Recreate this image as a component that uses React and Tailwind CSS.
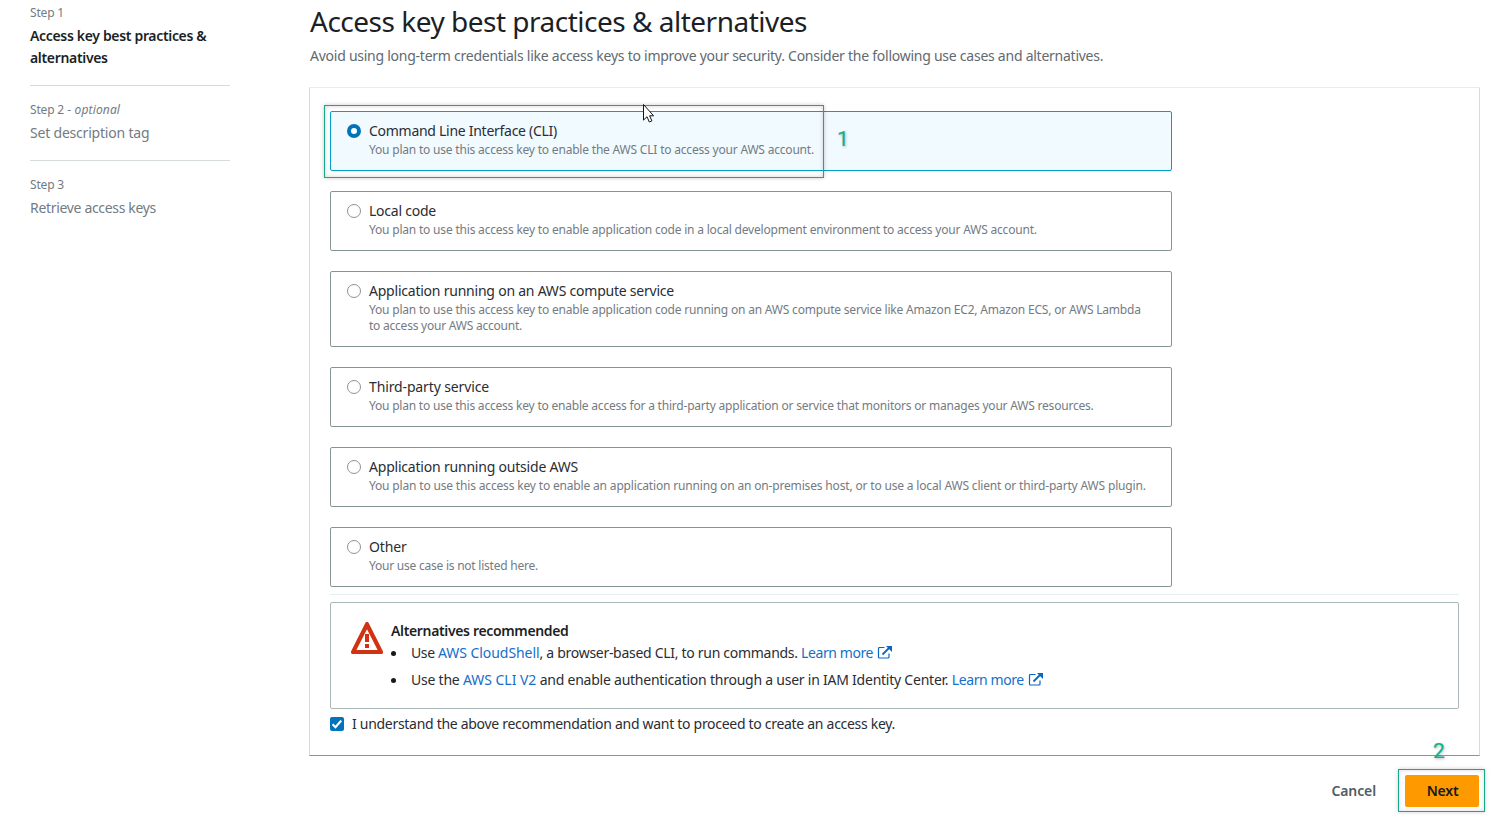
import React from "react";

const USE_CASES = [
  {
    title: "Command Line Interface (CLI)",
    titleClass: "tracking-[-0.278px]",
    lines: [
      ["You plan to use this access key to enable the AWS CLI to access your AWS account.", "tracking-[-0.197px]"],
    ],
    selected: true,
  },
  {
    title: "Local code",
    titleClass: "tracking-[-0.233px]",
    lines: [
      ["You plan to use this access key to enable application code in a local development environment to access your AWS account.", "tracking-[-0.195px]"],
    ],
  },
  {
    title: "Application running on an AWS compute service",
    titleClass: "tracking-[-0.225px]",
    lines: [
      ["You plan to use this access key to enable application code running on an AWS compute service like Amazon EC2, Amazon ECS, or AWS Lambda", "tracking-[-0.194px]"],
      ["to access your AWS account.", "tracking-[-0.228px]"],
    ],
  },
  {
    title: "Third-party service",
    titleClass: "tracking-[-0.13px]",
    lines: [
      ["You plan to use this access key to enable access for a third-party application or service that monitors or manages your AWS resources.", "tracking-[-0.207px]"],
    ],
  },
  {
    title: "Application running outside AWS",
    titleClass: "tracking-[-0.206px]",
    lines: [
      ["You plan to use this access key to enable an application running on an on-premises host, or to use a local AWS client or third-party AWS plugin.", "tracking-[-0.166px]"],
    ],
  },
  {
    title: "Other",
    titleClass: "tracking-[-0.164px]",
    lines: [["Your use case is not listed here.", "tracking-[-0.232px]"]],
  },
];

function Radio({ selected }) {
  return selected ? (
    <span className="mt-1 size-3.5 shrink-0 rounded-full border-[4.5px] border-[#0073bb] bg-white" />
  ) : (
    <span className="mt-1 size-3.5 shrink-0 rounded-full border border-[#879596] bg-white" />
  );
}

function Tile({ item }) {
  return (
    <div
      className={`relative flex w-[842px] gap-2 rounded-[2px] border pt-2 pb-3 pl-4 ${
        item.selected ? "border-[#00a1c9] bg-[#f1faff]" : "border-[#879596] bg-white"
      }`}
    >
      <Radio selected={item.selected} />
      <div className="whitespace-nowrap">
        <div className={`text-[14px] leading-[22px] text-[#2a2d33] ${item.titleClass}`}>{item.title}</div>
        {item.lines.map(([text, cls]) => (
          <div key={text} className={`text-[12px] leading-4 text-[#737b83] ${cls}`}>
            {text}
          </div>
        ))}
      </div>
      {item.selected && (
        <>
          <div className="absolute -top-[7px] -left-[7px] h-[73px] w-[500px] border border-[#16a98c] shadow-[0_0_4px_rgba(0,0,0,0.22),inset_0_0_4px_rgba(0,0,0,0.18)]" />
          <span className="absolute top-[14px] left-[506px] font-[Roboto,sans-serif] text-[21px] leading-[26px] text-[#12b18e] [-webkit-text-stroke:0.2px_#12b18e] [text-shadow:1px_1px_3px_rgba(0,0,0,0.3)]">
            1
          </span>
          <Cursor />
        </>
      )}
    </div>
  );
}

function Cursor() {
  return (
    <svg className="absolute -top-[9px] left-[310px] h-[21px] w-[13px]" viewBox="0 0 13 21">
      <path d="M2.5 1.500v15.600l3.500-3.400 2.300 5.300 2.600-1.100-2.300-5.100h4z" fill="#fff" stroke="#10141c" strokeWidth="1" />
    </svg>
  );
}

function ExternalIcon() {
  return (
    <svg className="ml-1 inline-block h-[15px] w-[15px] align-[-2px]" viewBox="0 0 15 15" fill="none">
      <path d="M7.500 2.500h-5a1 1 0 0 0-1 1V12a1 1 0 0 0 1 1H11a1 1 0 0 0 1-1V8.500" stroke="#0b66c3" strokeWidth="1.200" />
      <path d="M5.500 9.500 12.500 2.500" stroke="#0b66c3" strokeWidth="1.800" />
      <path d="M9 1h6v6z" fill="#0b66c3" />
    </svg>
  );
}

function Link({ children, className }) {
  return (
    <a href="#" className={`text-[#166fc8] ${className}`}>
      {children}
    </a>
  );
}

function Step({ label, optional, title, active, first, last }) {
  return (
    <li className={`${first ? "pt-[5px]" : "pt-4"} ${last ? "" : "border-b border-[#d5dbdb]"} pb-4`}>
      <div className="text-[12px] leading-4 tracking-[-0.17px] text-[#737b83]">
        {label}
        {optional && <span className="tracking-[0.14px]"> - <i>optional</i></span>}
      </div>
      <div
        className={`mt-1 text-[14px] leading-[22px] whitespace-nowrap ${
          active ? "font-semibold tracking-[-0.33px] text-[#1c1f25]" : "text-[#737b83]"
        }`}
      >
        {title}
      </div>
    </li>
  );
}

export default function App() {
  return (
    <div className="flex h-[815px] w-[1494px] overflow-hidden bg-white font-['Noto_Sans',sans-serif]">
      <nav className="ml-[30px] w-[200px] shrink-0">
        <ol>
          <Step first active label="Step 1" title={<>Access key best practices &amp;<br />alternatives</>} />
          <Step label="Step 2" optional title={<span className="tracking-[-0.2px]">Set description tag</span>} />
          <Step last label="Step 3" title={<span className="tracking-[-0.325px]">Retrieve access keys</span>} />
        </ol>
      </nav>

      <main className="ml-[79px] w-[1171px] shrink-0 pt-[3px]">
        <header className="pl-px whitespace-nowrap">
          <h1 className="text-[28px] leading-9 tracking-[-0.495px] text-[#1c1f25]">
            Access key best practices &amp; alternatives
          </h1>
          <p className="mt-[6px] text-[14px] leading-[22px] tracking-[-0.25px] text-[#626970]">
            Avoid using long-term credentials like access keys to improve your security. Consider the following use cases and alternatives.
          </p>
        </header>

        <section className="mt-5 h-[669px] border border-t-[#eaeded] border-r-[#d5dbdb] border-b-[#879596] border-l-[#d5dbdb] px-5 pt-[23px]">
          <div className="flex flex-col gap-5">
            {USE_CASES.map((item) => (
              <Tile key={item.title} item={item} />
            ))}
          </div>

          <hr className="mt-[7px] border-[#eaeded]" />

          <div className="mt-[7px] flex h-[107px] gap-2 rounded-[2px] border border-[#aab7b8] pt-[17px] pl-5 text-[14px] leading-[22px] whitespace-nowrap text-[#2a2d33]">
            <svg className="mt-[2px] h-[32px] w-8 shrink-0" viewBox="0 0 32 32">
              <path d="M15 0h2l1.200 2L32 29.500V31l-1 1H1l-1-1v-1.500L13.800 2z" fill="#d13212" />
              <path d="M16 7.200 26.600 28H5.400z" fill="#fff" />
              <path d="M14 12h4v8h-4zM14 22h4v4h-4z" fill="#d13212" />
            </svg>
            <div>
              <div className="font-semibold tracking-[-0.348px] text-[#1c1f25]">Alternatives recommended</div>
              <ul className="flex flex-col gap-[5px]">
                <li className="flex items-center">
                  <span className="mr-[15px] size-[5px] rounded-full bg-[#16191f]" />
                  <span>
                    <span className="tracking-[-0.369px]">Use </span>
                    <Link className="tracking-[-0.06px]">AWS CloudShell</Link>
                    <span className="tracking-[-0.293px]">, a browser-based CLI, to run commands. </span>
                    <Link className="tracking-[-0.412px]">Learn more<ExternalIcon /></Link>
                  </span>
                </li>
                <li className="flex items-center">
                  <span className="mr-[15px] size-[5px] rounded-full bg-[#16191f]" />
                  <span>
                    <span className="tracking-[-0.22px]">Use the </span>
                    <Link className="tracking-[-0.04px]">AWS CLI V2</Link>
                    <span className="tracking-[-0.235px]"> and enable authentication through a user in IAM Identity Center. </span>
                    <Link className="tracking-[-0.412px]">Learn more<ExternalIcon /></Link>
                  </span>
                </li>
              </ul>
            </div>
          </div>

          <label className="mt-1 flex items-center gap-2 text-[14px] leading-[22px] tracking-[-0.296px] text-[#2a2d33]">
            <span className="flex size-3.5 items-center justify-center rounded-[2px] bg-[#0073bb]">
              <svg className="size-3.5" viewBox="0 0 14 14" fill="none">
                <path d="M2.500 7.300 5.500 10.200 11.200 3.600" stroke="#fff" strokeWidth="2.200" />
              </svg>
            </span>
            I understand the above recommendation and want to proceed to create an access key.
          </label>
        </section>

        <footer className="mt-[19px] flex items-center justify-end gap-[29px] pr-px text-[14px] leading-[22px] font-semibold">
          <button className="tracking-[-0.12px] text-[#545b64]">Cancel</button>
          <div className="relative">
            <button className="flex h-8 w-[74px] items-center justify-center rounded-[2px] bg-[#ff9900] pl-px tracking-[-0.2px] text-[#16191f]">
              Next
            </button>
            <div className="absolute -top-[6px] -left-[7px] h-[43px] w-[87px] border border-[#16a98c] shadow-[0_0_4px_rgba(0,0,0,0.2),inset_0_0_4px_rgba(0,0,0,0.15)]" />
            <span className="absolute -top-[37px] left-[28px] font-[Roboto,sans-serif] text-[21px] leading-[26px] font-normal text-[#12b18e] [-webkit-text-stroke:0.2px_#12b18e] [text-shadow:1px_1px_3px_rgba(0,0,0,0.3)]">
              2
            </span>
          </div>
        </footer>
      </main>
    </div>
  );
}
